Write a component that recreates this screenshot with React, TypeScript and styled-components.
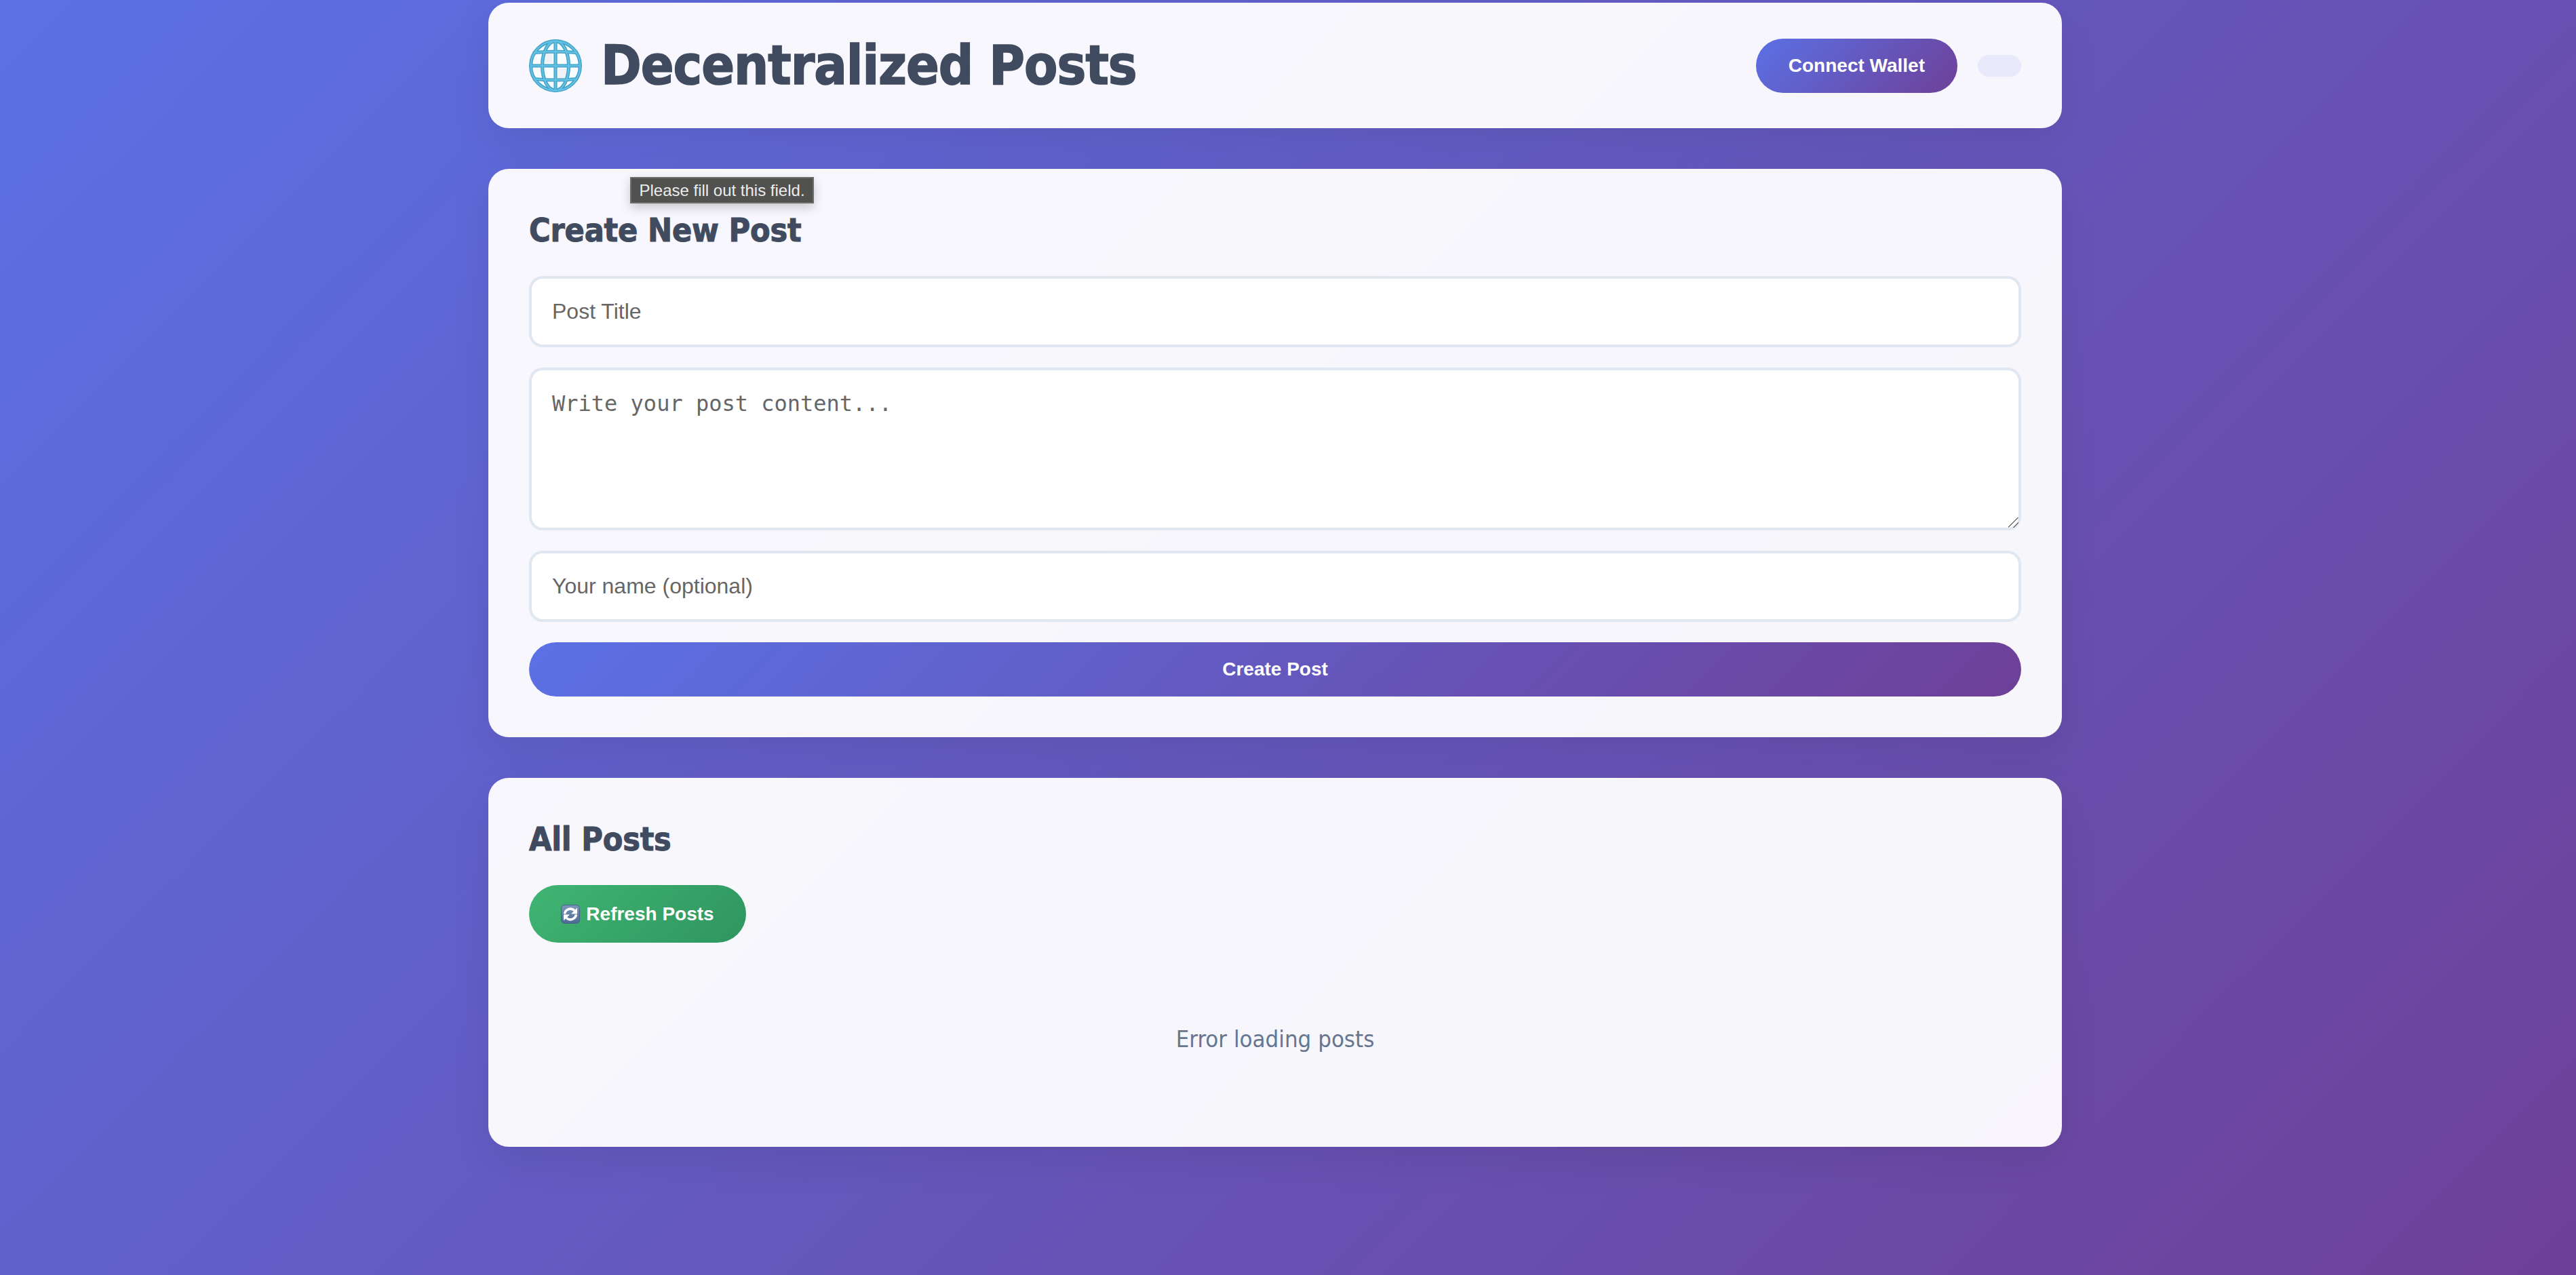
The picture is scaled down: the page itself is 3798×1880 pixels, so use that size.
import React, { FC } from "react";
import styled, { createGlobalStyle } from "styled-components";

const GlobalStyle = createGlobalStyle`
  html, body {
    margin: 0;
    padding: 0;
    height: 100%;
  }
  body {
    background: linear-gradient(135deg, #5b71e5 0%, #6e4098 100%);
    min-height: 1880px;
    padding-right: 38px;
    font-family: "Liberation Sans", Arial, sans-serif;
  }
  * {
    box-sizing: border-box;
  }
  input::placeholder,
  textarea::placeholder {
    color: #666;
    opacity: 1;
  }
`;

const Page = styled.div`
  width: 2320px;
  margin: 0 auto;
  padding-top: 4px;
  display: flex;
  flex-direction: column;
  gap: 60px;
`;

const Card = styled.section`
  position: relative;
  background: rgba(255, 255, 255, 0.95);
  border-radius: 30px;
  padding: 60px;
  box-shadow: 0 20px 60px rgba(0, 0, 0, 0.08);
`;

const Header = styled(Card)`
  height: 185px;
  padding: 0 60px;
  display: flex;
  align-items: center;
  justify-content: space-between;
`;

const Title = styled.h1`
  margin: 0;
  display: flex;
  align-items: center;
  gap: 28px;
  font-family: "DejaVu Sans Condensed", "DejaVu Sans", sans-serif;
  font-stretch: condensed;
  font-size: 80px;
  font-weight: 700;
  letter-spacing: -1px;
  -webkit-text-stroke: 1.6px #414b60;
  color: #414b60;
`;

const HeaderActions = styled.div`
  display: flex;
  align-items: center;
  gap: 30px;
`;

const GradientButton = styled.button`
  height: 80px;
  border: none;
  border-radius: 40px;
  background: linear-gradient(135deg, #5b71e5 0%, #6e4098 100%);
  color: #fff;
  font-family: "Liberation Sans", Arial, sans-serif;
  font-size: 28px;
  font-weight: 700;
  padding: 0 48px;
`;

const ToggleStub = styled.div`
  width: 64px;
  height: 32px;
  border-radius: 18px;
  background: #e8e9fa;
`;

const SectionTitle = styled.h2`
  margin: 1px 0 39px;
  font-family: "DejaVu Sans Condensed", "DejaVu Sans", sans-serif;
  font-stretch: condensed;
  font-size: 48px;
  line-height: 58px;
  font-weight: 700;
  letter-spacing: -0.2px;
  -webkit-text-stroke: 1px #414b60;
  color: #414b60;
`;

const Form = styled.form`
  display: flex;
  flex-direction: column;
  gap: 30px;
`;

const TextInput = styled.input`
  width: 100%;
  height: 105px;
  padding: 0 30px;
  border: 4px solid #e0e7f0;
  border-radius: 20px;
  background: #fff;
  font-family: "Liberation Sans", Arial, sans-serif;
  font-size: 32px;
  outline: none;
`;

const TextArea = styled.textarea`
  display: block;
  width: 100%;
  height: 240px;
  padding: 30px;
  border: 4px solid #e0e7f0;
  border-radius: 20px;
  background: #fff;
  font-family: "DejaVu Sans Mono", monospace;
  font-size: 32px;
  outline: none;

  &::-webkit-resizer {
    background: linear-gradient(
      135deg,
      transparent 46%,
      #777 46%,
      #777 53%,
      transparent 53%,
      transparent 72%,
      #777 72%,
      #777 79%,
      transparent 79%
    );
  }
`;

const Tooltip = styled.div`
  position: absolute;
  left: 209px;
  top: 12px;
  width: 271px;
  height: 39px;
  display: flex;
  align-items: center;
  justify-content: center;
  background: #515250;
  border: 2px solid #6c6c6b;
  color: #ececec;
  font-size: 24px;
  box-shadow: 0 6px 16px rgba(0, 0, 0, 0.2);
`;

const RefreshButton = styled.button`
  height: 85px;
  width: 320px;
  border: none;
  border-radius: 43px;
  background: linear-gradient(135deg, #40b572 0%, #2f9560 100%);
  color: #fff;
  font-family: "Liberation Sans", Arial, sans-serif;
  font-size: 28px;
  font-weight: 700;
  display: flex;
  align-items: center;
  justify-content: center;
  gap: 9px;
`;

const StatusText = styled.div`
  padding: 121px 0 78px;
  text-align: center;
  font-family: "DejaVu Sans Condensed", "DejaVu Sans", sans-serif;
  font-stretch: condensed;
  font-size: 34.5px;
  line-height: 42px;
  color: #67758f;
`;

const GlobeIcon: FC = () => (
  <svg width="78" height="78" viewBox="0 0 76 76" fill="none" strokeLinecap="round">
    <circle cx="38" cy="38" r="35" fill="#fafdff" />
    <path d="M20 16h14v18H20zM42 42h14v14H42z" fill="#e4eaef" opacity="0.55" />
    <g stroke="#3f9fc6" strokeWidth="5">
      <circle cx="38" cy="38" r="35.5" />
      <ellipse cx="38" cy="38" rx="19" ry="35.5" />
      <path d="M38 3v70M3 38h70M8 19Q38 16 68 19M8 57Q38 60 68 57" />
    </g>
    <g stroke="#62c1e2" strokeWidth="2.4">
      <circle cx="38" cy="38" r="35.5" />
      <ellipse cx="38" cy="38" rx="19" ry="35.5" />
      <path d="M38 3v70M3 38h70M8 19Q38 16 68 19M8 57Q38 60 68 57" />
    </g>
  </svg>
);

const RefreshIcon: FC = () => (
  <svg width="28" height="28" viewBox="0 0 28 28">
    <defs>
      <linearGradient id="refreshFill" x1="0" y1="0" x2="0" y2="1">
        <stop offset="0" stopColor="#7d97b8" />
        <stop offset="1" stopColor="#4c6a92" />
      </linearGradient>
    </defs>
    <rect x="0.5" y="0.5" width="27" height="27" rx="5" fill="url(#refreshFill)" stroke="#46618a" />
    <path d="M5.500 13.500a8.700 8.700 0 0 1 14.500-5" fill="none" stroke="#fff" strokeWidth="3.6" />
    <path d="M22.500 14.500a8.700 8.700 0 0 1-14.500 5" fill="none" stroke="#fff" strokeWidth="3.6" />
    <path d="M24 4.500v9h-9zM4 23.500v-9h9z" fill="#fff" />
  </svg>
);

const App: FC = () => {
  return (
    <>
      <GlobalStyle />
      <Page>
        <Header as="header">
          <Title>
            <GlobeIcon />
            Decentralized Posts
          </Title>
          <HeaderActions>
            <GradientButton type="button">Connect Wallet</GradientButton>
            <ToggleStub />
          </HeaderActions>
        </Header>

        <Card>
          <Tooltip>Please fill out this field.</Tooltip>
          <SectionTitle>Create New Post</SectionTitle>
          <Form>
            <TextInput placeholder="Post Title" />
            <TextArea placeholder="Write your post content..." />
            <TextInput placeholder="Your name (optional)" />
            <GradientButton type="button">Create Post</GradientButton>
          </Form>
        </Card>

        <Card>
          <SectionTitle>All Posts</SectionTitle>
          <RefreshButton type="button">
            <RefreshIcon />
            Refresh Posts
          </RefreshButton>
          <StatusText>Error loading posts</StatusText>
        </Card>
      </Page>
    </>
  );
};

export default App;
